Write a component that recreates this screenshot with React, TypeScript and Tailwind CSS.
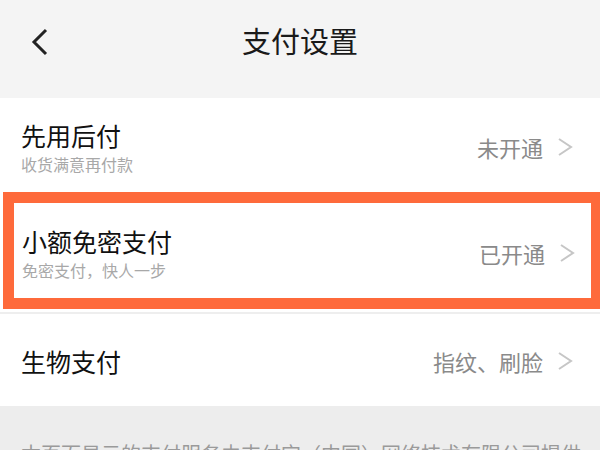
import React from 'react';

const font = { fontFamily: '"Noto Sans CJK SC", "Noto Sans", sans-serif' };

const Chevron = () => (
  <svg width="16" height="18" viewBox="0 0 16 18" className="ml-[14px]">
    <polyline points="2,1 14,9 2,17" fill="none" stroke="#c6c6c6" strokeWidth="2" />
  </svg>
);

type RowProps = { title: string; sub?: string; value: string; className: string };

const Row = ({ title, sub, value, className }: RowProps) => (
  <div className={`flex items-center justify-between ${className}`}>
    <div className="flex flex-col">
      <span className="text-[25px] leading-[30px] text-[#111]">{title}</span>
      {sub && <span className="mt-[4px] text-[16px] leading-[20px] text-[#a8a8a8]">{sub}</span>}
    </div>
    <div className="flex items-center">
      <span className="text-[22px] leading-[28px] text-[#8a8a8a]">{value}</span>
      <Chevron />
    </div>
  </div>
);

export default function App() {
  return (
    <div className="w-[600px] h-[450px] overflow-hidden bg-[#ededed]" style={font}>
      {/* header */}
      <div className="relative h-[98px] bg-[#f4f4f4] flex justify-center pt-[20px]">
        <svg width="20" height="30" viewBox="0 0 20 30" className="absolute left-[30px] top-[27px]">
          <polyline points="16,3 4,15 16,27" fill="none" stroke="#222" strokeWidth="3" />
        </svg>
        <span className="text-[29px] leading-[40px] text-[#1a1a1a]">支付设置</span>
      </div>

      <div className="bg-white">
        <Row
          title="先用后付"
          sub="收货满意再付款"
          value="未开通"
          className="h-[94px] pt-[3px] pl-[21px] pr-[27px]"
        />

        <div className="ml-[3px] border-[11px] border-r-[9px] border-[#fe6a3b]">
          <Row
            title="小额免密支付"
            sub="免密支付，快人一步"
            value="已开通"
            className="h-[95px] pt-[5px] pl-[8px] pr-[16px]"
          />
        </div>

        <div className="h-[3px]" />
        <div className="h-[2px] bg-[#eeeeee]" />
        <Row title="生物支付" value="指纹、刷脸" className="h-[92px] pt-[2px] pl-[21px] pr-[27px]" />
      </div>

      <div className="pt-[34px] pl-[21px] whitespace-nowrap text-[20px] leading-[28px] text-[#9a9a9a]">
        本页面显示的支付服务由支付宝（中国）网络技术有限公司提供
      </div>
    </div>
  );
}
